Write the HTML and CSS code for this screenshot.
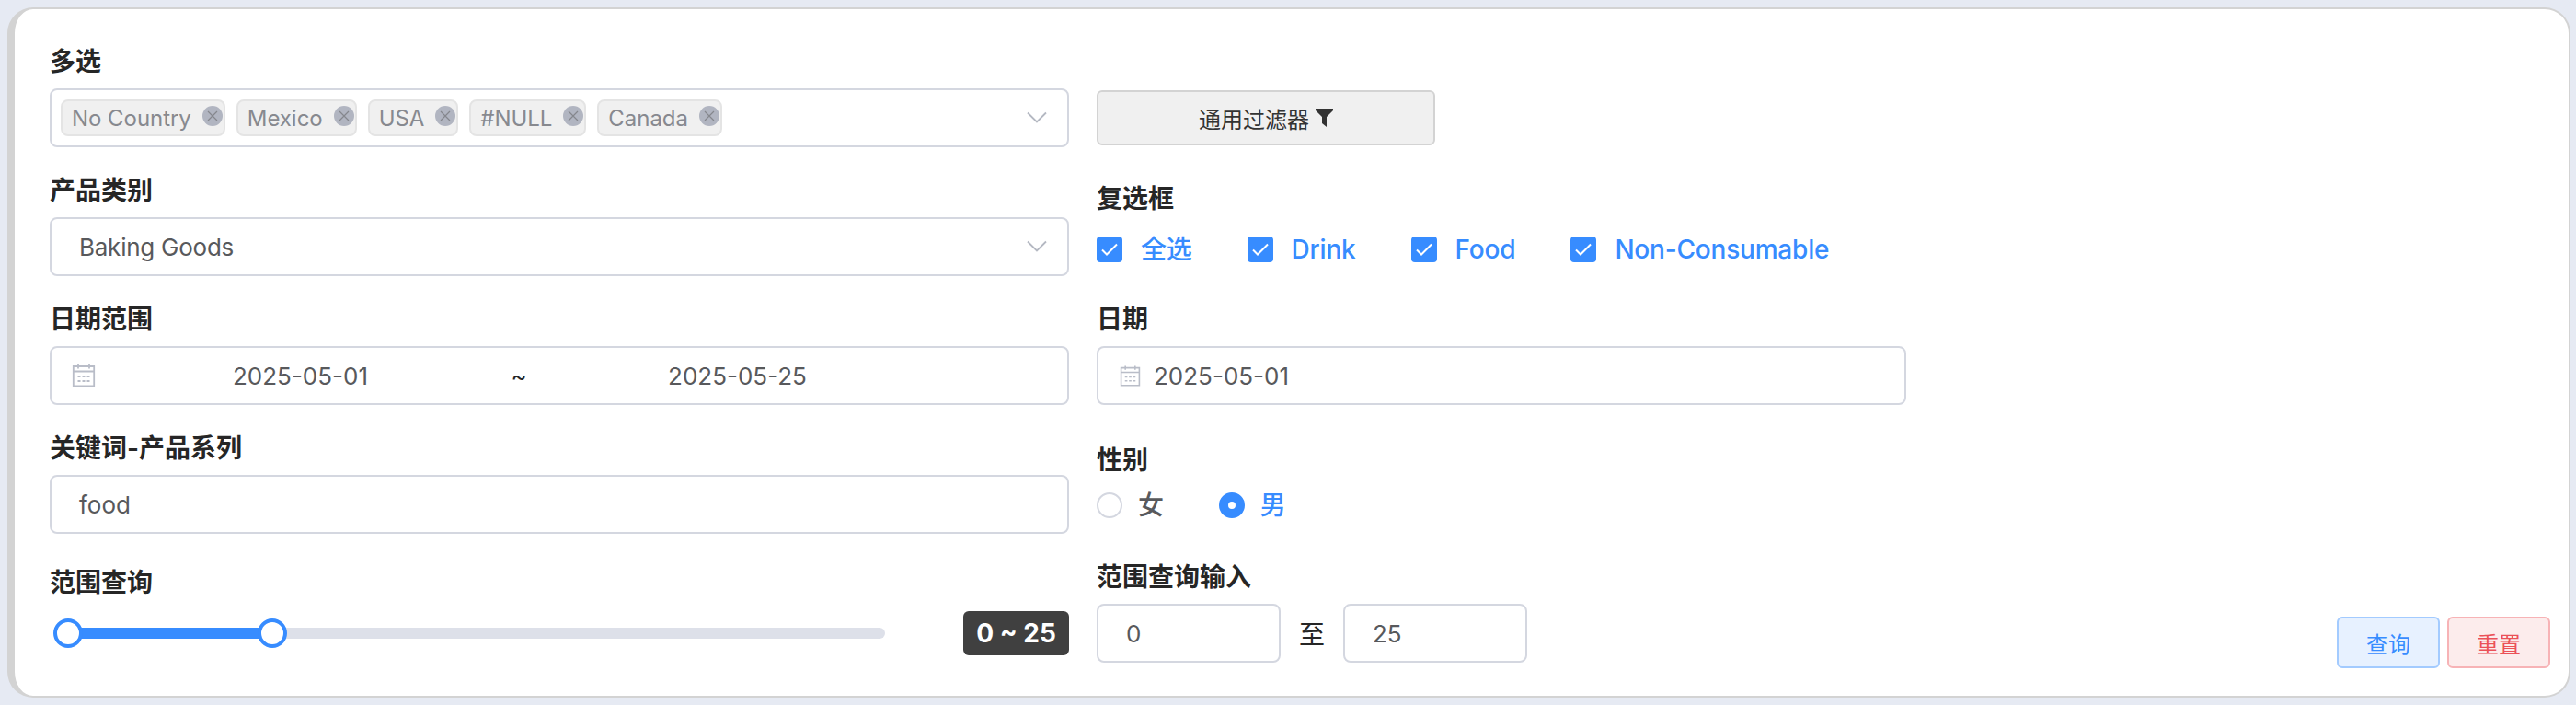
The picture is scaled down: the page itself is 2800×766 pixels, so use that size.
FILE: index.html
```html
<!DOCTYPE html>
<html lang="zh-CN">
<head>
    <meta charset="UTF-8">
    <meta name="viewport" content="width=device-width, initial-scale=1.0">
    <title>查询条件</title>
    <link rel="stylesheet" href="styles.css">
</head>
<body>
    <svg class="sprite">
        <symbol id="arrow" viewBox="0 0 24 24"><path d="M2 6.500l10 10 10-10" fill="none" stroke="currentColor" stroke-width="1.800"/></symbol>
        <symbol id="close" viewBox="0 0 12 12"><path d="M1 1l10 10M11 1L1 11" fill="none" stroke="currentColor" stroke-width="1.200"/></symbol>
        <symbol id="check" viewBox="0 0 28 28"><path d="M6 14.500l5 5L22 8.500" fill="none" stroke="#fff" stroke-width="2"/></symbol>
        <symbol id="calendar" viewBox="0 0 26 26">
            <path d="M1.800 3h22.400v21.500H1.800zM1.800 8.500h22.400M7 .5v5M19 .5v5" fill="none" stroke="currentColor" stroke-width="1.800"/>
            <path d="M6.500 14h3M11.500 14h3M16.500 14h3M6.500 19h3M11.500 19h3M16.500 19h3" fill="none" stroke="currentColor" stroke-width="1.800"/>
        </symbol>
    </svg>

    <div class="panel">
        <div class="column left">
            <div class="field">
                <label class="label">多选</label>
                <div class="input tags">
                    <span class="tag">No Country<i class="tag-close"><svg><use href="#close"/></svg></i></span>
                    <span class="tag">Mexico<i class="tag-close"><svg><use href="#close"/></svg></i></span>
                    <span class="tag">USA<i class="tag-close"><svg><use href="#close"/></svg></i></span>
                    <span class="tag">#NULL<i class="tag-close"><svg><use href="#close"/></svg></i></span>
                    <span class="tag">Canada<i class="tag-close"><svg><use href="#close"/></svg></i></span>
                    <svg class="arrow"><use href="#arrow"/></svg>
                </div>
            </div>
            <div class="field">
                <label class="label">产品类别</label>
                <div class="input">
                    <span class="selected">Baking Goods</span>
                    <svg class="arrow"><use href="#arrow"/></svg>
                </div>
            </div>
            <div class="field">
                <label class="label">日期范围</label>
                <div class="input date-range">
                    <svg class="calendar"><use href="#calendar"/></svg>
                    <span class="date">2025-05-01</span>
                    <span class="separator">~</span>
                    <span class="date">2025-05-25</span>
                </div>
            </div>
            <div class="field">
                <label class="label">关键词-产品系列</label>
                <div class="input"><span>food</span></div>
            </div>
            <div class="field slider-field">
                <label class="label">范围查询</label>
                <div class="slider-row">
                    <div class="slider">
                        <div class="slider-bar"></div>
                        <div class="handle handle-start"></div>
                        <div class="handle handle-end"></div>
                    </div>
                    <span class="slider-value">0 ~ 25</span>
                </div>
            </div>
        </div>

        <div class="column right">
            <button class="filter-btn">
                <span>通用过滤器</span>
                <svg class="funnel" viewBox="0 0 19 20"><path d="M0 0h19v2l-7 7v11l-5-4V9L0 2z" fill="currentColor"/></svg>
            </button>
            <div class="field check-field">
                <label class="label">复选框</label>
                <div class="options">
                    <span class="option checked"><svg class="checkbox"><use href="#check"/></svg>全选</span>
                    <span class="option checked"><svg class="checkbox"><use href="#check"/></svg>Drink</span>
                    <span class="option checked"><svg class="checkbox"><use href="#check"/></svg>Food</span>
                    <span class="option checked"><svg class="checkbox"><use href="#check"/></svg>Non-Consumable</span>
                </div>
            </div>
            <div class="field date-field">
                <label class="label">日期</label>
                <div class="input date-single">
                    <svg class="calendar"><use href="#calendar"/></svg>
                    <span class="date">2025-05-01</span>
                </div>
            </div>
            <div class="field radio-field">
                <label class="label">性别</label>
                <div class="options">
                    <span class="option radio-option"><i class="radio"></i>女</span>
                    <span class="option radio-option checked"><i class="radio"></i>男</span>
                </div>
            </div>
            <div class="field range-field">
                <label class="label">范围查询输入</label>
                <div class="range-inputs">
                    <div class="input"><span>0</span></div>
                    <span>至</span>
                    <div class="input"><span>25</span></div>
                </div>
            </div>
        </div>

        <div class="actions">
            <button class="btn query">查询</button>
            <button class="btn reset">重置</button>
        </div>
    </div>
</body>
</html>
```

FILE: styles.css
```css
* {
    box-sizing: border-box;
}

body {
    margin: 0;
    padding: 8px 6px 8px 8px;
    height: 766px;
    background: #e6eaf3;
    font-family: Inter, "Noto Sans CJK SC", sans-serif;
    font-size: 26px;
    color: #262626;
    overflow: hidden;
}

button {
    font-family: inherit;
}

.sprite {
    display: none;
}

.panel {
    display: flex;
    height: 750px;
    padding: 38px 20px 30px 38px;
    background: #fff;
    border: 2px solid #d3d3d3;
    border-left-width: 8px;
    border-radius: 28px;
}

.column {
    display: flex;
    flex-direction: column;
}

.left {
    width: 1108px;
    margin-right: 30px;
}

.right {
    width: 880px;
}

.field {
    flex: none;
    margin-bottom: 28px;
}

.label {
    display: block;
    height: 36px;
    line-height: 38px;
    margin-bottom: 12px;
    font-size: 28px;
    font-weight: 600;
}

.input {
    display: flex;
    align-items: center;
    height: 64px;
    padding: 0 21px 0 30px;
    border: 2px solid #d4d7e0;
    border-radius: 8px;
    color: #58595c;
}

.selected {
    letter-spacing: -0.25px;
}

.arrow {
    width: 24px;
    height: 24px;
    margin-left: auto;
    color: #b4b8c2;
}

/* tags */
.tags {
    gap: 12px;
    padding-left: 10px;
}

.tag {
    display: flex;
    align-items: center;
    height: 40px;
    padding: 0 1px 0 10px;
    background: #f0f0f0;
    border: 2px solid #e4e4e4;
    border-radius: 8px;
    font-size: 24px;
    letter-spacing: -0.05px;
    color: #87898f;
}

.tag-close {
    display: flex;
    align-items: center;
    justify-content: center;
    width: 22px;
    height: 22px;
    margin: 0 0 4px 12px;
    border-radius: 50%;
    background: #b1b5c1;
    color: #85878d;
}

.tag-close svg {
    width: 12px;
    height: 12px;
}

/* dates */
.calendar {
    flex: none;
    width: 26px;
    height: 26px;
    color: #b9bdc8;
}

.date-range {
    padding: 0 136px 0 22px;
}

.date-range .date {
    flex: 1;
    text-align: center;
}

.separator {
    width: 30px;
    text-align: center;
    color: #262626;
}

.date-single {
    padding-left: 23px;
}

.date-single .calendar {
    width: 23px;
    height: 23px;
    margin-right: 14px;
}

/* slider */
.slider-field {
    margin-top: 6px;
}

.slider-row {
    display: flex;
    align-items: center;
    justify-content: space-between;
    height: 48px;
    margin-top: 14px;
    padding-left: 20px;
}

.slider {
    position: relative;
    width: 888px;
    height: 12px;
    border-radius: 6px;
    background: #dde0e9;
}

.slider-bar {
    width: 25%;
    height: 12px;
    background: #378cff;
}

.handle {
    position: absolute;
    top: -10px;
    width: 32px;
    height: 32px;
    margin-left: -16px;
    border: 4px solid #378cff;
    border-radius: 50%;
    background: #fff;
}

.handle-start {
    left: 0;
}

.handle-end {
    left: 25%;
}

.slider-value {
    height: 48px;
    line-height: 48px;
    width: 115px;
    text-align: center;
    border-radius: 6px;
    background: #404040;
    color: #fff;
    font-size: 28px;
    font-weight: 700;
}

/* right column */
.filter-btn {
    display: flex;
    flex: none;
    align-items: center;
    justify-content: center;
    gap: 7px;
    width: 368px;
    height: 60px;
    margin-top: 50px;
    background: #f0f0f0;
    border: 2px solid #d3d3d3;
    border-radius: 6px;
    font-size: 24px;
    color: #333;
}

.funnel {
    width: 19px;
    height: 20px;
}

.check-field {
    margin: 39px 0 37px;
}

.check-field .options {
    margin-top: 18px;
}

.options {
    display: flex;
    align-items: center;
    height: 40px;
}

.option {
    display: flex;
    align-items: center;
    gap: 20px;
    margin-right: 60px;
    font-size: 28px;
    font-weight: 500;
    line-height: 40px;
    letter-spacing: -0.2px;
    color: #58595c;
}

.option.checked {
    color: #378cff;
}

.checkbox {
    width: 28px;
    height: 28px;
    border-radius: 4px;
    background: #378cff;
}

.radio-option {
    gap: 17px;
}

.radio {
    width: 28px;
    height: 28px;
    border: 2px solid #d4d7e0;
    border-radius: 50%;
}

.checked .radio {
    border: 10px solid #378cff;
}

.date-field {
    margin-bottom: 41px;
}

.radio-field {
    margin-bottom: 39px;
}

.range-inputs {
    display: flex;
    align-items: center;
    gap: 20px;
    font-size: 28px;
}

.range-inputs .input {
    width: 200px;
    font-size: 26px;
}

/* bottom buttons */
.actions {
    display: flex;
    align-items: flex-end;
    gap: 8px;
    margin-left: auto;
}

.btn {
    width: 112px;
    height: 56px;
    border: 2px solid;
    border-radius: 6px;
    font-size: 24px;
}

.query {
    color: #378cff;
    background: #e7f1ff;
    border-color: #a3cbff;
}

.reset {
    color: #eb5158;
    background: #fcecec;
    border-color: #f7b3b6;
}
```
